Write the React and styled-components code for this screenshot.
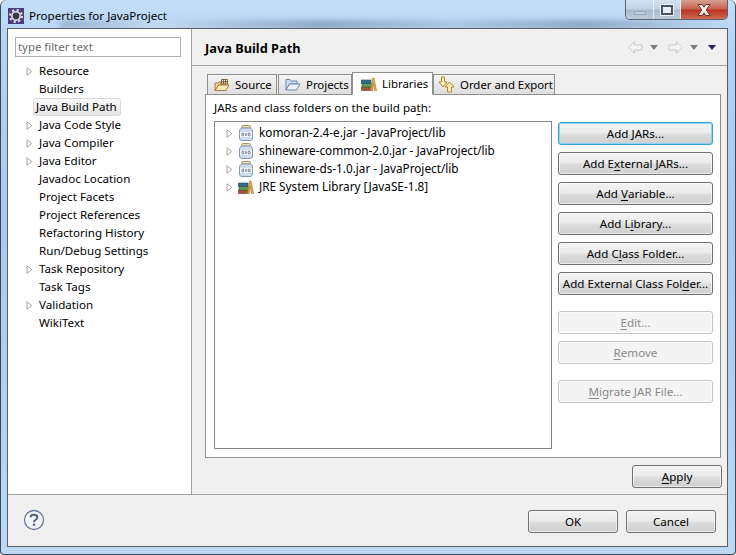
import React from "react";
import styled, { createGlobalStyle } from "styled-components";

const GlobalStyle = createGlobalStyle`
  html, body {
    margin: 0;
    padding: 0;
    background: #fff;
  }
  * {
    box-sizing: border-box;
  }
`;

const TREE = [
  { label: "Resource", arrow: true },
  { label: "Builders" },
  { label: "Java Build Path", selected: true },
  { label: "Java Code Style", arrow: true },
  { label: "Java Compiler", arrow: true },
  { label: "Java Editor", arrow: true },
  { label: "Javadoc Location" },
  { label: "Project Facets" },
  { label: "Project References" },
  { label: "Refactoring History" },
  { label: "Run/Debug Settings" },
  { label: "Task Repository", arrow: true },
  { label: "Task Tags" },
  { label: "Validation", arrow: true },
  { label: "WikiText" },
];

const ENTRIES = [
  { label: "komoran-2.4-e.jar - JavaProject/lib", icon: "jar" },
  { label: "shineware-common-2.0.jar - JavaProject/lib", icon: "jar" },
  { label: "shineware-ds-1.0.jar - JavaProject/lib", icon: "jar" },
  { label: "JRE System Library [JavaSE-1.8]", icon: "books" },
];

const Arrow = () => (
  <svg width="7" height="9" viewBox="0 0 7 9">
    <path d="M1 .8 L5.8 4.5 L1 8.2 Z" fill="#fff" stroke="#a6a6a6" />
  </svg>
);

const JarIcon = () => (
  <svg width="16" height="16" viewBox="0 0 16 16">
    <rect x="3.5" y="0.5" width="9" height="2.5" rx="1" fill="#eadfb6" stroke="#a89a6a" />
    <path d="M4 3 h8 c1.5 .5 2.5 1.5 2.5 3 v7 c0 1.5 -1 2.5 -2.5 2.5 h-8 c-1.5 0 -2.5 -1 -2.5 -2.5 v-7 c0 -1.5 1 -2.5 2.5 -3 Z" fill="#cfdcec" stroke="#8398b6" />
    <rect x="2" y="7" width="12" height="5" fill="#f6f8fb" />
    <ellipse cx="4.8" cy="9.5" rx="1" ry="1.5" fill="none" stroke="#4a5a72" strokeWidth="0.8" />
    <path d="M8 8 v3" stroke="#4a5a72" strokeWidth="1" />
    <ellipse cx="11.2" cy="9.5" rx="1" ry="1.5" fill="none" stroke="#4a5a72" strokeWidth="0.8" />
  </svg>
);

const BooksIcon = () => (
  <svg width="16" height="14" viewBox="0 0 16 14">
    <rect x="0.5" y="10" width="10" height="3.5" fill="#a5563a" stroke="#6d3520" strokeWidth="0.6" />
    <rect x="1" y="6.5" width="9.5" height="3.5" fill="#5f9a5a" stroke="#37683a" strokeWidth="0.6" />
    <rect x="0.5" y="3" width="9.5" height="3.5" fill="#356c8e" stroke="#1f4660" strokeWidth="0.6" />
    <path d="M9.5 13.5 L11.5 1 L13 1 L15.5 13.5 L13.5 13.5 L12.2 6 L11.5 13.5 Z" fill="#e3a94a" stroke="#a8742a" strokeWidth="0.6" />
  </svg>
);

const SourceIcon = () => (
  <svg width="16" height="14" viewBox="0 0 16 14">
    <path d="M1 12.5 V5 h3 l1 -1 h2 v3 H4.5 Z" fill="#f0d596" stroke="#a67d3c" />
    <path d="M1 12.5 L4.5 7 H15 L12 12.5 Z" fill="#fae8b8" stroke="#a67d3c" />
    <path d="M7.5 1.5 h6 v4.5 h-6 Z M9.5 1 v5 M11.5 1 v5 M7.5 3.7 h6" fill="none" stroke="#7a5526" strokeWidth="0.9" />
  </svg>
);

const FolderIcon = () => (
  <svg width="16" height="14" viewBox="0 0 16 14">
    <path d="M1 12 V1.5 h4 l1 1.5 h6 v3 H4.5 Z" fill="#cfdde9" stroke="#6f89a8" />
    <path d="M1 12 L4.5 6 H15 L11.5 12 Z" fill="#eef3f7" stroke="#6f89a8" />
  </svg>
);

const OrderIcon = () => (
  <svg width="18" height="17" viewBox="0 0 18 17">
    <path d="M3.5 1 h3 v5 h2.5 L5 11 L1 6 h2.5 Z" fill="#fbeeb8" stroke="#b08a2e" />
    <path d="M11.5 6 L16 11 h-2.5 v5 h-4 v-5 H7 Z" fill="#fbeeb8" stroke="#b08a2e" />
  </svg>
);

const GearIcon = () => (
  <svg width="16" height="16" viewBox="0 0 16 16">
    <rect width="16" height="16" fill="#4b3f7a" />
    <circle cx="8" cy="8" r="6" fill="none" stroke="#dcdcdc" strokeWidth="2" strokeDasharray="2.2 2.5" />
    <circle cx="8" cy="8" r="4.2" fill="#3d3a4e" stroke="#e4e4e4" strokeWidth="1.6" />
  </svg>
);

const CloseMark = () => (
  <svg width="18" height="14" viewBox="0 0 18 14">
    <path d="M3 1.5 H7 L9 4.2 L11 1.5 H15 L11.2 7 L15 12.5 H11 L9 9.8 L7 12.5 H3 L6.8 7 Z" fill="#f3ece8" stroke="#6e3a30" />
  </svg>
);

const NavArrow = ({ flip }) => (
  <svg width="15" height="13" viewBox="0 0 15 13" style={flip ? { transform: "scaleX(-1)" } : undefined}>
    <path d="M.8 6.5 L6.5 .8 V4 H14 V9 H6.5 V12.2 Z" fill="#f4f4f4" stroke="#c8c8c8" />
  </svg>
);

const HelpIcon = () => (
  <svg width="22" height="22" viewBox="0 0 22 22">
    <circle cx="11" cy="11" r="9.5" fill="#f4f5f8" stroke="#6a7a9c" strokeWidth="1.3" />
    <path d="M7.6 8.3 C7.8 4.9 14.3 4.9 14.3 8.5 C14.3 10.9 11 10.6 11 13.2" fill="none" stroke="#4f5f82" strokeWidth="2" />
    <rect x="9.9" y="14.6" width="2.2" height="2.2" fill="#4f5f82" />
  </svg>
);

const Frame = styled.div`
  position: relative;
  width: 736px;
  height: 555px;
  padding: 0 8px 8px 7px;
  display: flex;
  flex-direction: column;
  overflow: hidden;
  border: 1px solid #3c4a58;
  border-top: none;
  border-radius: 6px 6px 4px 4px;
  background: linear-gradient(180deg, #c3def7 0%, #b4d4f4 8%, #a8c9ec 40%, #bcd8f3 100%);
  font-family: "Noto Sans", "Open Sans", sans-serif;
  font-size: 11.6px;
  color: #000;
`;

const BlurredBackdrop = styled.div`
  position: absolute;
  top: 21px;
  left: 60px;
  right: 20px;
  height: 7px;
  background: linear-gradient(90deg, #8ea6c4 0%, #c5d9ef 15%, #7f96b6 40%, #a8c2e0 60%, #7f96b6 80%, #bad2ec 100%);
  filter: blur(3px);
`;

const TitleBar = styled.div`
  position: relative;
  height: 29px;
  flex: none;
  display: flex;
  align-items: flex-start;
`;

const TitleIcon = styled.span`
  display: flex;
  margin: 8px 5px 0 0;
`;

const TitleText = styled.span`
  margin-top: 7px;
  line-height: 18px;
`;

const Caption = styled.div`
  margin-left: auto;
  margin-right: -1px;
  display: flex;
  height: 20px;
  border: 1px solid #55626f;
  border-top: none;
  border-radius: 0 0 5px 5px;
  overflow: hidden;
`;

const CaptionButton = styled.div`
  width: ${(p) => p.$w}px;
  display: flex;
  align-items: center;
  justify-content: center;
  border-right: 1px solid #e8eef5;
  background: linear-gradient(180deg, #d3e2f1 0%, #c2d2e2 48%, #a9bccd 52%, #bccbd9 100%);

  &:last-child {
    border-right: none;
    background: linear-gradient(180deg, #d8a090 0%, #c9604d 48%, #b8331f 52%, #cf6a52 100%);
  }
`;

const MinGlyph = styled.span`
  width: 12px;
  height: 4px;
  margin-top: 6px;
  background: #c4d0dc;
  border: 1px solid #97a6b6;
`;

const MaxGlyph = styled.span`
  width: 12px;
  height: 10px;
  background: #e6edf3;
  border: 2px solid #46566a;
  outline: 1px solid #eef3f8;
`;

const Client = styled.div`
  position: relative;
  flex: 1;
  min-height: 0;
  display: flex;
  flex-direction: column;
  background: #f0f0f0;
  outline: 1px solid #54606c;
`;

const Body = styled.div`
  height: 466px;
  flex: none;
  display: flex;
  border-bottom: 1px solid #a0a0a0;
`;

const Sidebar = styled.div`
  width: 184px;
  flex: none;
  padding: 8px 10px 0 7px;
  background: #fff;
  border-right: 1px solid #a0a0a0;
`;

const Filter = styled.div`
  height: 20px;
  padding-left: 2px;
  margin-bottom: 5px;
  border: 1px solid #abadb3;
  line-height: 18px;
  color: #6d6d6d;
  font-size: 11.4px;
`;

const TreeRow = styled.div`
  height: 18px;
  display: flex;
  align-items: center;
  position: relative;
`;

const TreeArrow = styled.span`
  width: 21px;
  flex: none;
  padding-left: 11px;
  display: flex;
`;

const TreeLabel = styled.span`
  line-height: 18px;
  padding: 0 3px;
  margin-left: ${(p) => (p.$selected ? -3 : 0)}px;
  white-space: nowrap;
  ${(p) =>
    p.$selected &&
    `
    border: 1px solid #d9d9d9;
    border-radius: 3px;
    line-height: 16px;
    padding: 0 3px 0 2px;
    background: linear-gradient(180deg, #fafafa, #e5e5e5);
  `}
`;

const Main = styled.div`
  flex: 1;
  min-width: 0;
  display: flex;
  flex-direction: column;
`;

const Header = styled.div`
  height: 37px;
  flex: none;
  display: flex;
  align-items: center;
  padding: 0 11px 0 13px;
  border-bottom: 1px solid #a0a0a0;
`;

const HeaderTitle = styled.h1`
  margin: 2px 0 0;
  font-size: 12.8px;
  font-weight: 700;
`;

const NavTools = styled.div`
  margin-left: auto;
  display: flex;
  align-items: center;
  gap: 7px;
`;

const Caret = styled.span`
  width: 0;
  height: 0;
  margin-right: ${(p) => (p.$dark ? 0 : 3)}px;
  border-left: 4px solid transparent;
  border-right: 4px solid transparent;
  border-top: 5px solid ${(p) => (p.$dark ? "#2c1f63" : "#7d7d7d")};
`;

const Content = styled.div`
  flex: 1;
  min-height: 0;
  padding: 6px 6px 0 13px;
  display: flex;
  flex-direction: column;
`;

const Tabs = styled.div`
  height: 23px;
  flex: none;
  display: flex;
  align-items: flex-end;
  padding-left: 2px;
  position: relative;
  z-index: 1;
  margin-bottom: -1px;
`;

const Tab = styled.div`
  width: ${(p) => p.$w}px;
  height: ${(p) => (p.$active ? 23 : 21)}px;
  display: flex;
  align-items: center;
  gap: ${(p) => p.$gap}px;
  padding-left: ${(p) => p.$pad}px;
  margin-right: ${(p) => (p.$tight ? 0 : 1)}px;
  white-space: nowrap;
  font-size: 11.4px;
  border: 1px solid #8e8f8f;
  border-bottom: ${(p) => (p.$active ? "1px solid #fff" : "1px solid #8e8f8f")};
  background: ${(p) => (p.$active ? "#fff" : "linear-gradient(180deg, #f4f4f4, #dedede)")};
`;

const TabPanel = styled.div`
  height: 364px;
  flex: none;
  display: flex;
  gap: 6px;
  padding: 5px 7px 8px 8px;
  background: #fff;
  border: 1px solid #8e8f8f;
`;

const ListSection = styled.div`
  width: 338px;
  flex: none;
  display: flex;
  flex-direction: column;
`;

const ListLabel = styled.div`
  height: 21px;
  line-height: 16px;
  white-space: nowrap;
`;

const ListBox = styled.div`
  flex: 1;
  padding-top: 2px;
  border: 1px solid #828790;
`;

const EntryRow = styled.div`
  height: 18px;
  display: flex;
  align-items: center;
  white-space: nowrap;
`;

const EntryArrow = styled.span`
  width: 23px;
  flex: none;
  padding-left: 11px;
  display: flex;
`;

const EntryIcon = styled.span`
  width: 21px;
  flex: none;
  display: flex;
`;

const EntryText = styled.span`
  font-size: 11.75px;
  margin-bottom: 3px;
`;

const ButtonColumn = styled.div`
  flex: 1;
  padding-top: 22px;
  display: flex;
  flex-direction: column;
  gap: 7px;
`;

const Spacer = styled.div`
  height: ${(p) => p.$h}px;
  flex: none;
`;

const PushButton = styled.div`
  height: 23px;
  width: ${(p) => (p.$w ? `${p.$w}px` : "100%")};
  flex: none;
  display: flex;
  align-items: center;
  justify-content: center;
  white-space: pre;
  border-radius: 3px;
  border: 1px solid ${(p) => (p.$default ? "#3c9fd6" : p.$disabled ? "#c4c4c4" : "#707070")};
  color: ${(p) => (p.$disabled ? "#8a8a8a" : "#000")};
  background: ${(p) =>
    p.$disabled
      ? "#f4f4f4"
      : "linear-gradient(180deg, #f3f3f3 0%, #ebebeb 48%, #dddddd 52%, #cfcfcf 100%)"};
  box-shadow: ${(p) => (p.$default ? "inset 0 0 0 1px #8fd2f2" : "inset 0 0 0 1px rgba(255,255,255,.6)")};
`;

const Mnemonic = styled.span`
  text-decoration: underline;
  text-underline-offset: 2px;
`;

const ApplyRow = styled.div`
  height: 37px;
  flex: none;
  display: flex;
  justify-content: flex-end;
  align-items: center;
  margin-right: -1px;
`;

const Footer = styled.div`
  flex: 1;
  min-height: 0;
  display: flex;
  align-items: center;
  padding: 1px 11px 0 15px;
`;

const HelpButton = styled.span`
  display: flex;
  margin: 0 auto 2px 0;
`;

const FooterButtons = styled.div`
  display: flex;
  gap: 8px;
`;

const BUTTONS = [
  { text: "Add JARs...", isDefault: true },
  { pre: "Add E", key: "x", post: "ternal JARs..." },
  { pre: "Add ", key: "V", post: "ariable..." },
  { pre: "Add L", key: "i", post: "brary..." },
  { pre: "Add C", key: "l", post: "ass Folder..." },
  { pre: "Add External Class Fol", key: "d", post: "er..." },
  { gap: 2 },
  { pre: "", key: "E", post: "dit...", disabled: true },
  { pre: "", key: "R", post: "emove", disabled: true },
  { gap: 2 },
  { pre: "", key: "M", post: "igrate JAR File...", disabled: true },
];

export default function App() {
  return (
    <Frame>
      <GlobalStyle />
      <BlurredBackdrop />
      <TitleBar>
        <TitleIcon>
          <GearIcon />
        </TitleIcon>
        <TitleText>Properties for JavaProject</TitleText>
        <Caption>
          <CaptionButton $w={28}>
            <MinGlyph />
          </CaptionButton>
          <CaptionButton $w={27}>
            <MaxGlyph />
          </CaptionButton>
          <CaptionButton $w={46}>
            <CloseMark />
          </CaptionButton>
        </Caption>
      </TitleBar>
      <Client>
        <Body>
          <Sidebar>
            <Filter>type filter text</Filter>
            {TREE.map((item) => (
              <TreeRow key={item.label}>
                <TreeArrow>{item.arrow && <Arrow />}</TreeArrow>
                <TreeLabel $selected={item.selected}>{item.label}</TreeLabel>
              </TreeRow>
            ))}
          </Sidebar>
          <Main>
            <Header>
              <HeaderTitle>Java Build Path</HeaderTitle>
              <NavTools>
                <NavArrow />
                <Caret />
                <NavArrow flip />
                <Caret />
                <Caret $dark />
              </NavTools>
            </Header>
            <Content>
              <Tabs>
                <Tab $w={70} $gap={5} $pad={6}>
                  <SourceIcon />
                  Source
                </Tab>
                <Tab $w={74} $gap={5} $pad={6} $tight>
                  <FolderIcon />
                  Projects
                </Tab>
                <Tab $w={81} $active $gap={5} $pad={8} $tight>
                  <BooksIcon />
                  Libraries
                </Tab>
                <Tab $w={122} $gap={4} $pad={4}>
                  <OrderIcon />
                  Order and Export
                </Tab>
              </Tabs>
              <TabPanel>
                <ListSection>
                  <ListLabel>
                    JARs and class folders on the build pa<Mnemonic>t</Mnemonic>h:
                  </ListLabel>
                  <ListBox>
                    {ENTRIES.map((entry) => (
                      <EntryRow key={entry.label}>
                        <EntryArrow>
                          <Arrow />
                        </EntryArrow>
                        <EntryIcon>{entry.icon === "jar" ? <JarIcon /> : <BooksIcon />}</EntryIcon>
                        <EntryText>{entry.label}</EntryText>
                      </EntryRow>
                    ))}
                  </ListBox>
                </ListSection>
                <ButtonColumn>
                  {BUTTONS.map((b, i) =>
                    b.gap ? (
                      <Spacer key={i} $h={b.gap} />
                    ) : b.text ? (
                      <PushButton key={i} $default={b.isDefault}>
                        {b.text}
                      </PushButton>
                    ) : (
                      <PushButton key={i} $disabled={b.disabled}>
                        {b.pre}
                        <Mnemonic>{b.key}</Mnemonic>
                        {b.post}
                      </PushButton>
                    )
                  )}
                </ButtonColumn>
              </TabPanel>
              <ApplyRow>
                <PushButton $w={90}>
                  <Mnemonic>A</Mnemonic>pply
                </PushButton>
              </ApplyRow>
            </Content>
          </Main>
        </Body>
        <Footer>
          <HelpButton>
            <HelpIcon />
          </HelpButton>
          <FooterButtons>
            <PushButton $w={90}>OK</PushButton>
            <PushButton $w={90}>Cancel</PushButton>
          </FooterButtons>
        </Footer>
      </Client>
    </Frame>
  );
}
